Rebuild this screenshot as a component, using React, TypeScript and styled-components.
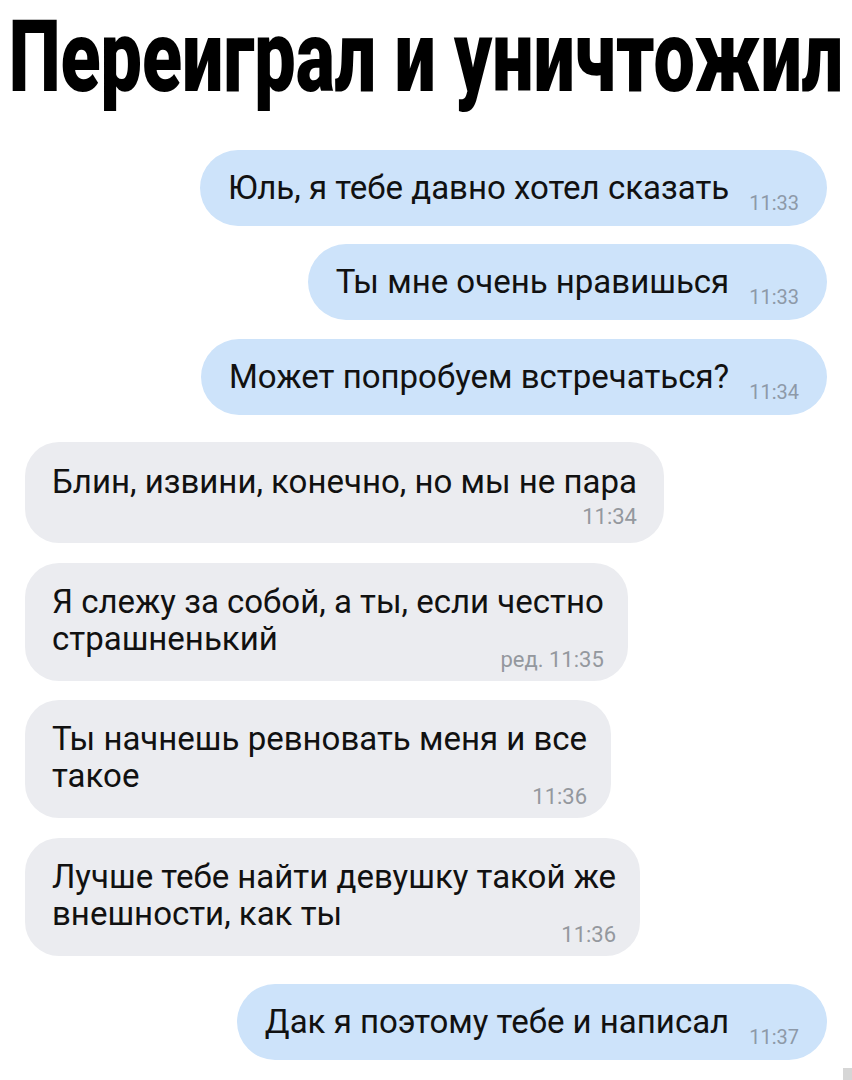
import React from 'react';
import styled, { createGlobalStyle } from 'styled-components';

const GlobalStyle = createGlobalStyle`
  html, body {
    margin: 0;
    padding: 0;
    background: #fff;
  }
  body {
    font-family: Roboto, 'Noto Sans', sans-serif;
    color: #111;
  }
`;

const Page = styled.div`
  position: relative;
  width: 852px;
  height: 1080px;
  overflow: hidden;
  display: flex;
  flex-direction: column;
`;

const TitleBox = styled.div`
  height: 150px;
  display: flex;
  justify-content: center;
`;

const Title = styled.h1`
  margin: 0;
  padding-top: 7px;
  font-family: Roboto, 'Noto Sans', sans-serif;
  font-weight: 900;
  font-size: 100px;
  line-height: 1;
  white-space: nowrap;
  color: #000;
  transform: scaleX(0.736);
`;

const Chat = styled.div`
  display: flex;
  flex-direction: column;
  padding: 0 25px;
`;

const Bubble = styled.div<{ $mine: boolean; $gap: number; $below?: boolean }>`
  align-self: ${(p) => (p.$mine ? 'flex-end' : 'flex-start')};
  margin-top: ${(p) => p.$gap}px;
  background: ${(p) => (p.$mine ? '#cde3fa' : '#ebecf0')};
  border-radius: ${(p) => (p.$mine ? '39px' : '34px')};
  padding: ${(p) =>
    p.$mine ? '19px 28px 20px 28px' : p.$below ? '21px 27px 15px 27px' : '20px 24px 24px 27px'};
`;

const Line = styled.div`
  font-size: 33px;
  line-height: 37px;
  white-space: nowrap;
`;

const LastRow = styled.div`
  display: flex;
  align-items: flex-end;
  gap: 20px;
  justify-content: space-between;
`;

const Time = styled.span<{ $mine?: boolean }>`
  flex: none;
  font-size: ${(p) => (p.$mine ? '20px' : '22px')};
  line-height: ${(p) => (p.$mine ? '20px' : '23px')};
  color: ${(p) => (p.$mine ? '#8d99a8' : '#94989e')};
  margin-bottom: ${(p) => (p.$mine ? '-7px' : '-14px')};
`;

const TimeRow = styled.div`
  margin-top: 5px;
  text-align: right;
  font-size: 22px;
  line-height: 23px;
  color: #94989e;
`;

const ScrollMark = styled.div`
  position: absolute;
  right: 0;
  bottom: 0;
  width: 9px;
  height: 12px;
  background: #d6d6d6;
`;

type Msg = {
  mine: boolean;
  lines: string[];
  time: string;
  gap: number;
  below?: boolean;
};

const messages: Msg[] = [
  { mine: true, lines: ['Юль, я тебе давно хотел сказать'], time: '11:33', gap: 0 },
  { mine: true, lines: ['Ты мне очень нравишься'], time: '11:33', gap: 18 },
  { mine: true, lines: ['Может попробуем встречаться?'], time: '11:34', gap: 19 },
  { mine: false, lines: ['Блин, извини, конечно, но мы не пара'], time: '11:34', gap: 27, below: true },
  { mine: false, lines: ['Я слежу за собой, а ты, если честно', 'страшненький'], time: 'ред. 11:35', gap: 20 },
  { mine: false, lines: ['Ты начнешь ревновать меня и все', 'такое'], time: '11:36', gap: 19 },
  { mine: false, lines: ['Лучше тебе найти девушку такой же', 'внешности, как ты'], time: '11:36', gap: 20 },
  { mine: true, lines: ['Дак я поэтому тебе и написал'], time: '11:37', gap: 28 },
];

const Message = ({ m }: { m: Msg }) => {
  const head = m.lines.slice(0, -1);
  const last = m.lines[m.lines.length - 1];
  return (
    <Bubble $mine={m.mine} $gap={m.gap} $below={m.below}>
      {head.map((l) => (
        <Line key={l}>{l}</Line>
      ))}
      {m.below ? (
        <>
          <Line>{last}</Line>
          <TimeRow>{m.time}</TimeRow>
        </>
      ) : (
        <LastRow>
          <Line>{last}</Line>
          <Time $mine={m.mine}>{m.time}</Time>
        </LastRow>
      )}
    </Bubble>
  );
};

const App = () => {
  return (
    <>
      <GlobalStyle />
      <Page>
        <TitleBox>
          <Title>Переиграл и уничтожил</Title>
        </TitleBox>
        <Chat>
          {messages.map((m, i) => (
            <Message key={i} m={m} />
          ))}
        </Chat>
        <ScrollMark />
      </Page>
    </>
  );
};

export default App;
